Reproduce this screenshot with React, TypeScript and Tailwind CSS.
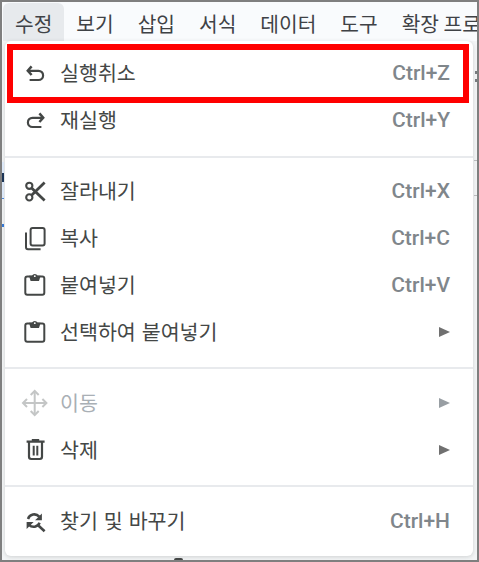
import { ReactNode } from "react";
import clsx from "clsx";

type Item = {
  label: string;
  icon: ReactNode;
  shortcut?: string;
  submenu?: boolean;
  disabled?: boolean;
};

const TABS = ["수정", "보기", "삽입", "서식", "데이터", "도구", "확장 프로"];

const Icon = ({ children, size = 26 }: { children: ReactNode; size?: number }) => (
  <svg
    width={size}
    height={size}
    viewBox="0 0 26 26"
    fill="none"
    stroke="currentColor"
    strokeWidth="2"
    className="shrink-0 overflow-visible"
  >
    {children}
  </svg>
);

const undoIcon = (
  <Icon>
    <path d="M5.5 10.8h10a4.6 4.6 0 0 1 0 9.2H6.6" strokeWidth="2.2" />
    <path d="M8.6 6.4 4.8 10.8l3.8 4.2" strokeWidth="2.5" />
  </Icon>
);

const redoIcon = (
  <Icon>
    <path d="M19.5 10.8h-10a4.6 4.6 0 0 0 0 9.2h8.9" strokeWidth="2.2" />
    <path d="m16.4 6.4 3.8 4.4-3.8 4.2" strokeWidth="2.5" />
  </Icon>
);

const cutIcon = (
  <Icon>
    <circle cx="6.3" cy="7.8" r="3.1" strokeWidth="2.1" />
    <circle cx="6.3" cy="19.4" r="3.1" strokeWidth="2.1" />
    <path d="M8.6 10 21.6 22.6M8.6 17.2 21.6 4.6" strokeWidth="2.8" />
  </Icon>
);

const copyIcon = (
  <Icon>
    <rect x="7.6" y="3" width="14" height="17.6" rx="2" />
    <path d="M3 7.5v14.7q0 2 2 2h12.6" />
  </Icon>
);

const pasteIcon = (
  <Icon>
    <rect x="2.3" y="4.6" width="19" height="18.2" rx="2" />
    <path d="M6 3.8h3a3 3 0 0 1 5.6 0h3L16 9H7.6z" fill="currentColor" stroke="none" />
    <circle cx="11.8" cy="4.2" r="0.9" fill="#fff" stroke="none" />
  </Icon>
);

const moveIcon = (
  <Icon>
    <path d="M11.7 2v22M.8 13h22" />
    <path d="m7.7 5 4-4 4 4M7.7 21l4 4 4-4M4 9l-4 4 4 4M19.4 9l4 4-4 4" />
  </Icon>
);

const deleteIcon = (
  <Icon>
    <path d="M3.6 4.6h18M8.8 3h7.4" strokeWidth="2.1" />
    <path d="M6 5v14.8q0 2.2 2.2 2.2h8.6q2.2 0 2.2-2.2V5" strokeWidth="2.2" />
    <path d="M10.7 8.8v9.6M14.3 8.8v9.6" strokeWidth="2" />
  </Icon>
);

const replaceIcon = (
  <Icon>
    <path d="M5 11a6.6 6.6 0 0 1 11.2-2.4" strokeWidth="2.5" />
    <path d="M18.9 5.4v6.8h-6.8z" fill="currentColor" stroke="none" />
    <path d="M16.6 14.8a6.4 6.4 0 0 1-10.6 2" strokeWidth="2.5" />
    <path d="M3.6 21v-7h7z" fill="currentColor" stroke="none" />
    <path d="m14.8 17 6.8 6.2" strokeWidth="2.6" />
  </Icon>
);

const GROUPS: Item[][] = [
  [
    { label: "실행취소", icon: undoIcon, shortcut: "Ctrl+Z" },
    { label: "재실행", icon: redoIcon, shortcut: "Ctrl+Y" },
  ],
  [
    { label: "잘라내기", icon: cutIcon, shortcut: "Ctrl+X" },
    { label: "복사", icon: copyIcon, shortcut: "Ctrl+C" },
    { label: "붙여넣기", icon: pasteIcon, shortcut: "Ctrl+V" },
    { label: "선택하여 붙여넣기", icon: pasteIcon, submenu: true },
  ],
  [
    { label: "이동", icon: moveIcon, submenu: true, disabled: true },
    { label: "삭제", icon: deleteIcon, submenu: true },
  ],
  [{ label: "찾기 및 바꾸기", icon: replaceIcon, shortcut: "Ctrl+H" }],
];

const MenuBar = () => (
  <nav className="flex h-[39px] shrink-0 items-stretch overflow-hidden bg-[#f9fbfd] pl-px text-[20.3px] text-[#3f4246]">
    {TABS.map((tab, i) => (
      <div
        key={tab}
        className={clsx(
          "flex shrink-0 items-center px-3 pt-1 whitespace-nowrap",
          i === 0 && "mt-px rounded-t-md bg-[#e7eaed] pt-[3px]"
        )}
      >
        {tab}
      </div>
    ))}
  </nav>
);

const MenuRow = ({ item }: { item: Item }) => (
  <li
    className={clsx(
      "flex h-[47px] items-center pr-[23px] pl-[18px]",
      item.disabled ? "text-[#a9afb5]" : "text-[#444746]"
    )}
  >
    <span className={clsx(item.disabled && "text-[#c4c6c6]")}>{item.icon}</span>
    <span className="ml-[11px] flex-1 text-[20.6px] leading-none [word-spacing:1.3px]">
      {item.label}
    </span>
    {item.shortcut && (
      <span className="pt-[2px] font-[Roboto] text-[21px] leading-none font-medium text-[#80868b]">
        {item.shortcut}
      </span>
    )}
    {item.submenu && (
      <svg
        width="12"
        height="10"
        viewBox="0 0 12 10"
        className={item.disabled ? "text-[#989ea3]" : "text-[#707070]"}
      >
        <path d="M1 0v10l11-5z" fill="currentColor" />
      </svg>
    )}
  </li>
);

const App = () => {
  return (
    <div className="relative flex h-[562px] w-[479px] flex-col overflow-hidden border-2 border-[#7f7f7f] bg-[#f3f5f6] font-['Noto_Sans_CJK_KR',sans-serif]">
      <MenuBar />
      <div className="mr-1 ml-[3px] h-[515px] shrink-0 rounded-md bg-white pt-[8px] shadow-[0_1px_4px_rgba(60,64,67,0.2)]">
        {GROUPS.map((group, i) => (
          <div key={i}>
            {i > 0 && (
              <div className={clsx("flex h-6 items-center", i === 1 ? "pt-[3px]" : "pt-px")}>
                <div className="h-[2px] w-full bg-[#e8eaed]" />
              </div>
            )}
            <ul>
              {group.map((item) => (
                <MenuRow key={item.label} item={item} />
              ))}
            </ul>
          </div>
        ))}
      </div>

      {/* highlight around the first command */}
      <div className="absolute top-[42px] left-[5px] h-[59px] w-[462px] border-6 border-[#ff0000]" />

      {/* slivers of the sheet behind the menu */}
      <div className="absolute top-[160px] left-0 h-[37px] w-[2px] border-b border-[#4a86d8] bg-[#dce8f8]" />
      <div className="absolute top-[171px] left-0 h-[9px] w-[2px] bg-[#1c3557]" />
      <div className="absolute top-[222px] left-0 h-[3px] w-[2px] bg-[#3478d4]" />
      <div className="absolute top-[69px] right-0 h-[3px] w-[2px] bg-[#777b7e]" />
      <div className="absolute top-[77px] right-0 h-[3px] w-[2px] bg-[#777b7e]" />
      <div className="absolute top-[158px] right-0 h-px w-[3px] bg-[#b8babc]" />
      <div className="absolute top-[193px] right-0 h-px w-[3px] bg-[#b8babc]" />
      <div className="absolute bottom-0 left-[172px] h-[2px] w-[9px] rounded-t-full bg-[#444746]" />
    </div>
  );
};

export default App;
